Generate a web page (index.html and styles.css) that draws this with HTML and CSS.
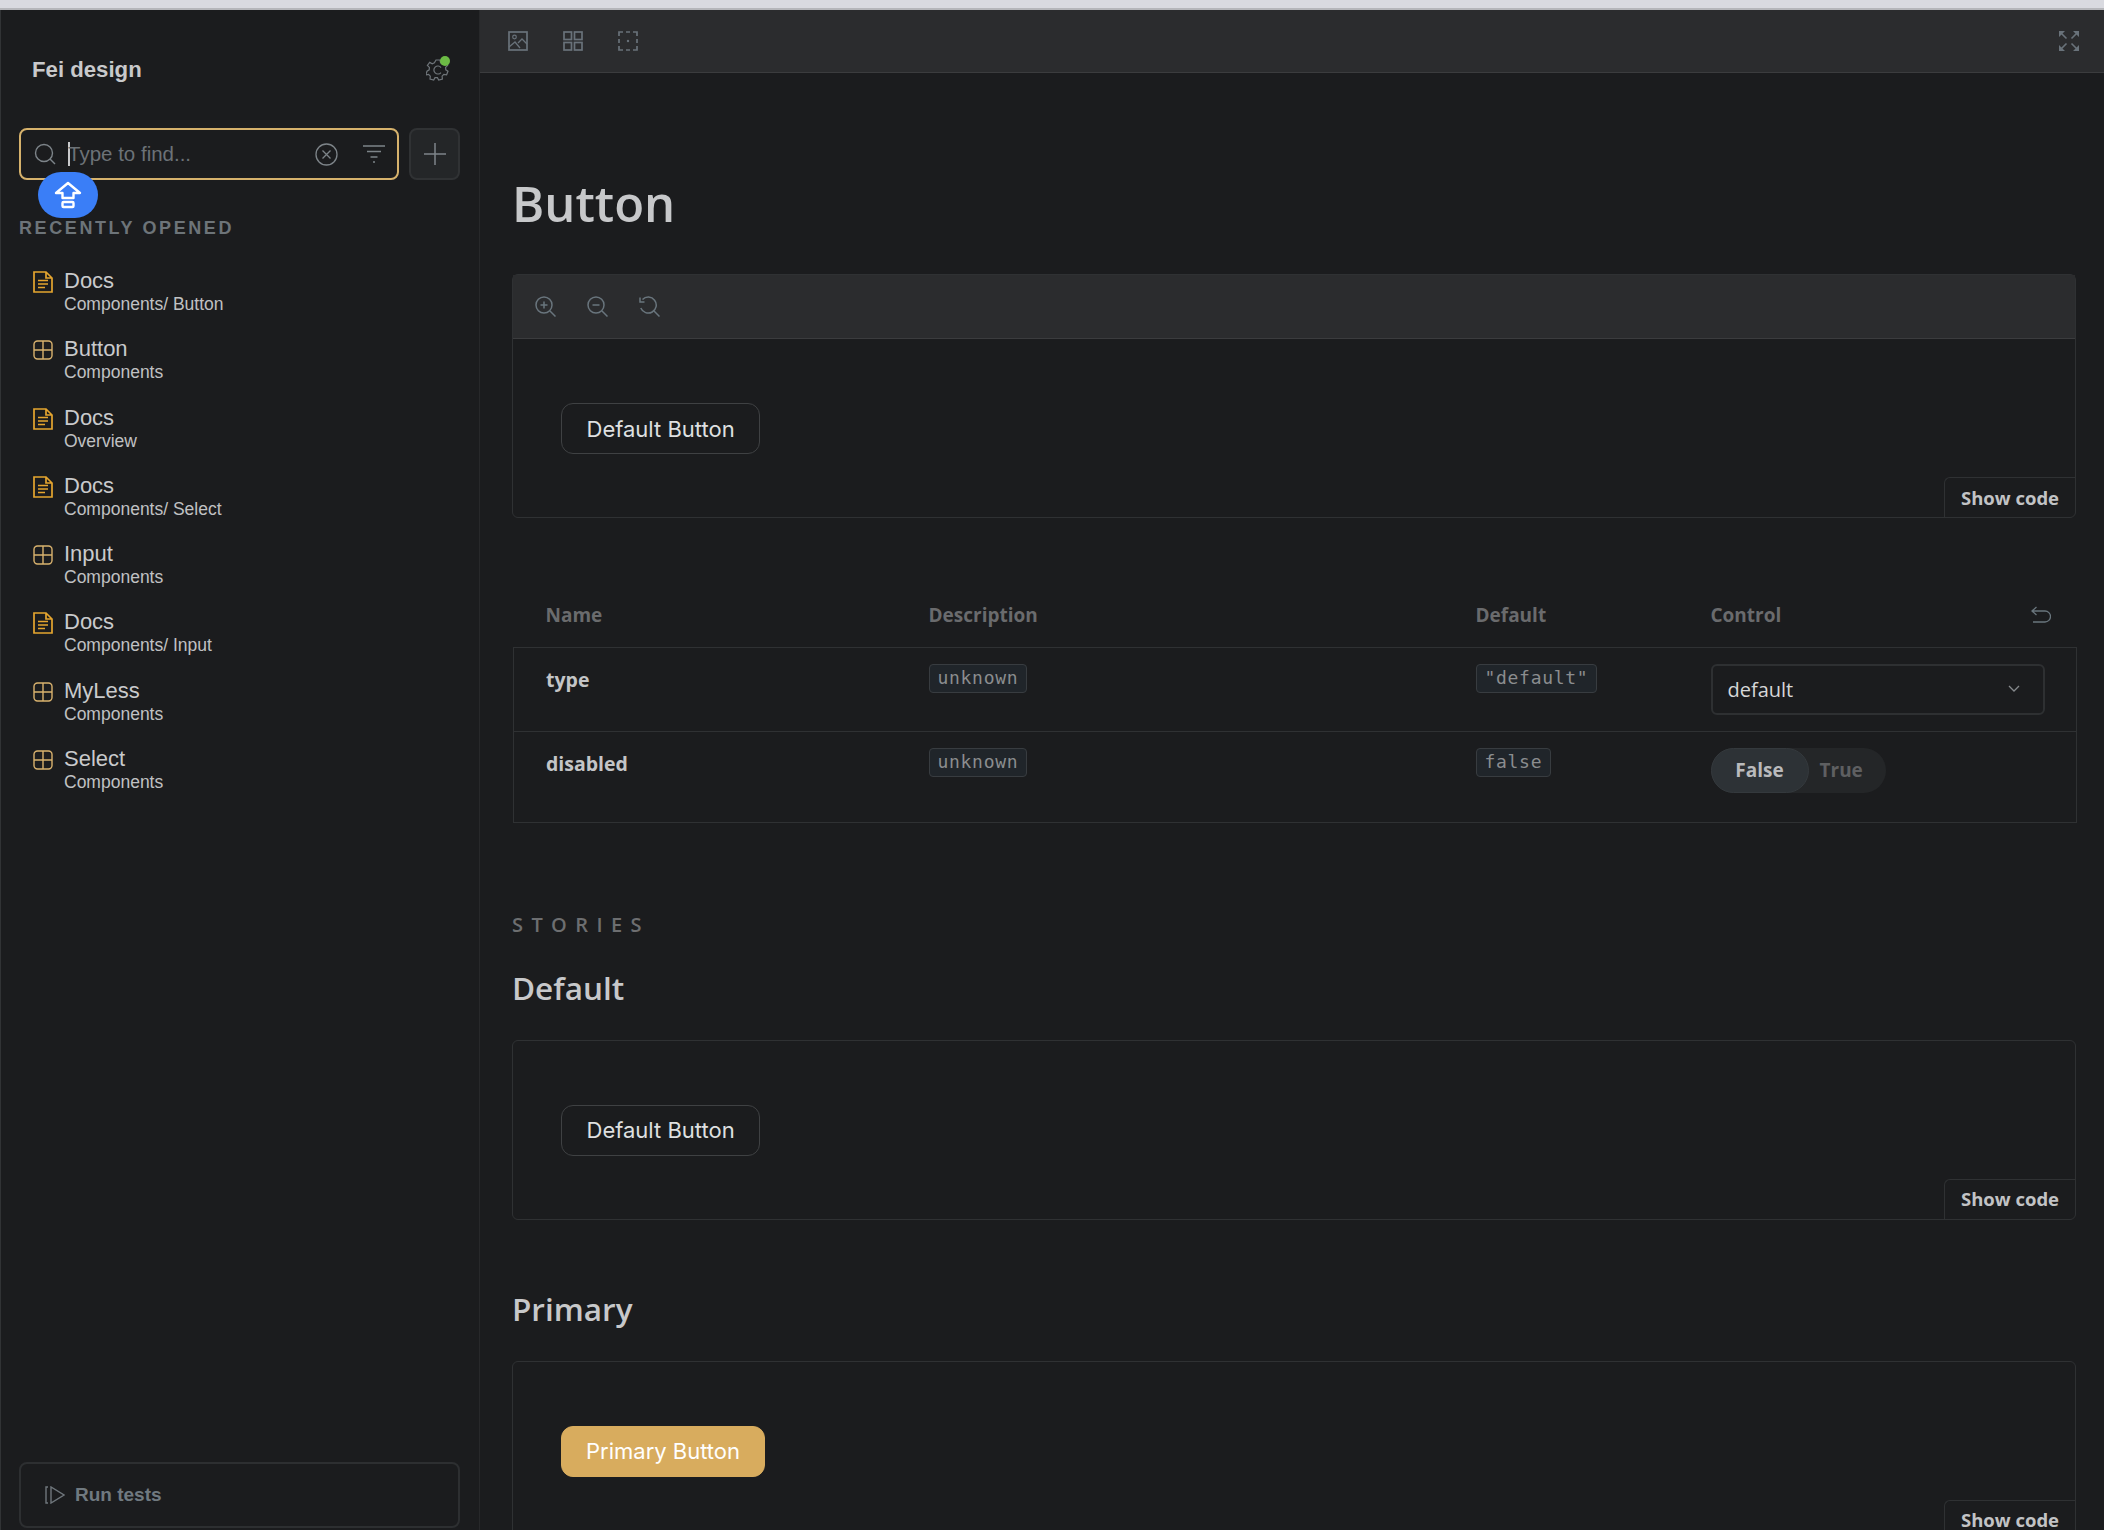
FILE: index.html
```html
<!DOCTYPE html>
<html lang="en">
<head>
  <meta charset="UTF-8">
  <title>Button</title>
  <link rel="stylesheet" href="styles.css">
</head>
<body>
  <svg class="defs" width="0" height="0">
    <symbol id="doc" viewBox="0 0 20 22">
      <path d="M1 1H13L19 7V21H1Z M13 1V7H19" fill="none" stroke="#e5a52f" stroke-width="1.7"/>
      <path d="M5 9.5H15M5 13H15M5 16.5H12" fill="none" stroke="#e5a52f" stroke-width="1.5"/>
    </symbol>
    <symbol id="comp" viewBox="0 0 20 20">
      <rect x="1" y="1" width="18" height="18" rx="3.5" fill="none" stroke="#d9b26e" stroke-width="1.4"/>
      <path d="M10 1V19M1 10H19" stroke="#d9b26e" stroke-width="1.4"/>
    </symbol>
  </svg>

  <div class="topline"></div>

  <div class="app">
    <aside class="sidebar">
      <div class="brand">
        <span class="brand-name">Fei design</span>
        <span class="settings">
          <svg width="24" height="24" viewBox="0 0 24 24" fill="none" stroke="#6f757a" stroke-width="1.2">
            <path d="M10 2h4l.6 2.8 2.2 1 2.5-1.4 2.3 3-2 2 .2 2.4 2.2 1.4-1.4 3.6-2.8-.4-1.7 1.8.3 2.9-3.7 1-1.3-2.4h-2.4l-1.3 2.4-3.7-1 .3-2.9-1.7-1.8-2.8.4L1 13.2l2.2-1.4.2-2.4-2-2 2.3-3 2.5 1.4 2.2-1z"/>
            <path d="M15 9.5a4 4 0 1 0 0 5"/>
          </svg>
          <i class="status-dot"></i>
        </span>
      </div>

      <div class="search-row">
        <div class="search">
          <svg width="22" height="22" viewBox="0 0 22 22" fill="none" stroke="#7d8489" stroke-width="1.4">
            <circle cx="10" cy="10" r="8.5"/><path d="M16 16l5 5"/>
          </svg>
          <span class="caret"></span>
          <span class="search-text">Type to find...</span>
          <svg class="clear" width="23" height="23" viewBox="0 0 23 23" fill="none" stroke="#7d8489" stroke-width="1.3">
            <circle cx="11.5" cy="11.5" r="10.5"/><path d="M7.5 7.5l8 8M15.5 7.5l-8 8"/>
          </svg>
          <svg class="filter" width="22" height="18" viewBox="0 0 22 18" fill="none" stroke="#7d8489" stroke-width="1.4">
            <path d="M0 1H22M4 6.500H18M7.500 12H14.500M10 17H12"/>
          </svg>
        </div>
        <div class="add">
          <svg width="24" height="24" viewBox="0 0 24 24" stroke="#7d8489" stroke-width="1.500"><path d="M12 1V23M1 12H23"/></svg>
        </div>
        <div class="shift-badge">
          <svg width="28" height="28" viewBox="0 0 28 28" fill="none" stroke="#fff" stroke-width="2.400" stroke-linejoin="round">
            <path d="M14 2L26 12H19.500V17H8.500V12H2Z"/><rect x="8.500" y="21" width="11" height="5" rx="1"/>
          </svg>
        </div>
      </div>

      <div class="section-label">RECENTLY OPENED</div>

      <ul class="recent">
        <li><svg class="ic"><use href="#doc"/></svg><div><b>Docs</b><small>Components/ Button</small></div></li>
        <li><svg class="ic"><use href="#comp"/></svg><div><b>Button</b><small>Components</small></div></li>
        <li><svg class="ic"><use href="#doc"/></svg><div><b>Docs</b><small>Overview</small></div></li>
        <li><svg class="ic"><use href="#doc"/></svg><div><b>Docs</b><small>Components/ Select</small></div></li>
        <li><svg class="ic"><use href="#comp"/></svg><div><b>Input</b><small>Components</small></div></li>
        <li><svg class="ic"><use href="#doc"/></svg><div><b>Docs</b><small>Components/ Input</small></div></li>
        <li><svg class="ic"><use href="#comp"/></svg><div><b>MyLess</b><small>Components</small></div></li>
        <li><svg class="ic"><use href="#comp"/></svg><div><b>Select</b><small>Components</small></div></li>
      </ul>

      <div class="run-tests">
        <svg width="20" height="18" viewBox="0 0 20 18" fill="none" stroke="#6f767c" stroke-width="1.400">
          <path d="M3 1H1V17H3M6 1V17L19 9Z"/>
        </svg>
        <span>Run tests</span>
      </div>
    </aside>

    <div class="content">
      <div class="toolbar">
        <div class="tool-group">
          <svg width="20" height="20" viewBox="0 0 20 20" fill="none" stroke="#69727a" stroke-width="1.700">
            <rect x="1" y="1" width="18" height="18"/><circle cx="6.500" cy="6" r="1.800" stroke-width="1.200"/><path d="M1 16l6-5 5 6M10 12l4-4 5 5" stroke-width="1.300"/>
          </svg>
          <svg width="20" height="20" viewBox="0 0 20 20" fill="none" stroke="#69727a" stroke-width="1.700">
            <rect x="1" y="1" width="7.500" height="7.500"/><rect x="11.500" y="1" width="7.500" height="7.500"/>
            <rect x="1" y="11.500" width="7.500" height="7.500"/><rect x="11.500" y="11.500" width="7.500" height="7.500"/>
          </svg>
          <svg width="20" height="20" viewBox="0 0 20 20" fill="none" stroke="#69727a" stroke-width="1.700">
            <path d="M1 5V1H5M8 1H12M15 1H19V5M19 8V12M19 15V19H15M12 19H8M5 19H1V15M1 12V8"/>
            <circle cx="10" cy="10" r="1.200" fill="#69727a" stroke="none"/>
          </svg>
        </div>
        <svg width="20" height="20" viewBox="0 0 20 20" fill="none" stroke="#69727a" stroke-width="1.600">
          <path d="M2 2l5.500 5.500M18 2l-5.500 5.500M2 18l5.500-5.500M18 18l-5.500-5.500"/>
          <path d="M0 6V0H6ZM14 0H20V6ZM0 14V20H6ZM20 14V20H14Z" fill="#69727a" stroke="none"/>
        </svg>
      </div>

      <main class="docs">
        <h1>Button</h1>

        <section class="canvas canvas-first">
          <div class="canvas-tools">
            <svg width="21" height="21" viewBox="0 0 21 21" fill="none" stroke="#69757d" stroke-width="1.500">
              <circle cx="9" cy="9" r="8"/><path d="M15 15l5.500 5.500M9 5.500v7M5.500 9h7"/>
            </svg>
            <svg width="21" height="21" viewBox="0 0 21 21" fill="none" stroke="#69757d" stroke-width="1.500">
              <circle cx="9" cy="9" r="8"/><path d="M15 15l5.500 5.500M5.500 9h7"/>
            </svg>
            <svg width="21" height="21" viewBox="0 0 21 21" fill="none" stroke="#69757d" stroke-width="1.500">
              <path d="M3.500 3.500A8 8 0 1 1 1.800 12M15 15l5.500 5.500M1 1.500V6H5.500"/>
            </svg>
          </div>
          <div class="canvas-body">
            <button class="btn">Default Button</button>
            <span class="show-code">Show code</span>
          </div>
        </section>

        <table class="args">
          <thead>
            <tr>
              <th class="col-name">Name</th>
              <th class="col-desc">Description</th>
              <th class="col-def">Default</th>
              <th class="col-ctl">
                <div class="ctl-head">
                  <span>Control</span>
                  <svg width="20" height="17" viewBox="0 0 20 17" fill="none" stroke="#69757d" stroke-width="1.300">
                    <path d="M5.500 1L1 5L5.500 9M1 5H14a5 5 0 0 1 0 11H2"/>
                  </svg>
                </div>
              </th>
            </tr>
          </thead>
          <tbody>
            <tr class="row-type">
              <td class="arg-name">type</td>
              <td><code>unknown</code></td>
              <td><code>"default"</code></td>
              <td>
                <div class="select">
                  <span>default</span>
                  <svg width="12" height="8" viewBox="0 0 12 8" fill="none" stroke="#85898c" stroke-width="1.300"><path d="M1 1l5 5 5-5"/></svg>
                </div>
              </td>
            </tr>
            <tr class="row-disabled">
              <td class="arg-name">disabled</td>
              <td><code>unknown</code></td>
              <td><code>false</code></td>
              <td>
                <div class="toggle">
                  <span class="on">False</span>
                  <span class="off">True</span>
                </div>
              </td>
            </tr>
          </tbody>
        </table>

        <div class="stories-label">STORIES</div>

        <h2 class="first-story">Default</h2>
        <section class="canvas">
          <div class="canvas-body">
            <button class="btn">Default Button</button>
            <span class="show-code">Show code</span>
          </div>
        </section>

        <h2 class="next-story">Primary</h2>
        <section class="canvas">
          <div class="canvas-body">
            <button class="btn btn-primary">Primary Button</button>
            <span class="show-code">Show code</span>
          </div>
        </section>
      </main>
    </div>
  </div>
</body>
</html>
```

FILE: styles.css
```css
* {
  box-sizing: border-box;
}

html, body {
  margin: 0;
  height: 100%;
  overflow: hidden;
}

body {
  background: #1b1c1e;
  font-family: "Open Sans", "Noto Sans", sans-serif;
  color: #c9cacc;
}

.defs {
  position: absolute;
}

.topline {
  height: 10px;
  background: #d9dae0;
  border-bottom: 2px solid #b5b6ba;
}

.app {
  display: flex;
  height: 1520px;
}

/* Sidebar */
.sidebar {
  width: 480px;
  flex: none;
  display: flex;
  flex-direction: column;
  padding: 0 19px 2px 18px;
  border-left: 1px solid #313335;
  border-right: 1px solid #27282a;
  font-family: "Liberation Sans", Arial, sans-serif;
}

.brand {
  display: flex;
  justify-content: space-between;
  align-items: center;
  height: 118px;
  padding: 2px 10px 0 13px;
}

.brand-name {
  font-size: 22.200px;
  font-weight: bold;
  color: #c8c9cb;
}

.settings {
  position: relative;
  display: block;
  width: 24px;
  height: 24px;
}

.status-dot {
  position: absolute;
  top: -2px;
  right: 0;
  width: 10px;
  height: 10px;
  border-radius: 50%;
  background: #6cbb45;
}

.search-row {
  position: relative;
  display: flex;
  gap: 10px;
}

.search {
  width: 380px;
  height: 52px;
  display: flex;
  align-items: center;
  padding: 0 12px 0 13px;
  border: 2px solid #d6b26c;
  border-radius: 8px;
}

.caret {
  width: 2px;
  height: 24px;
  margin-left: 12px;
  background: #c9cacc;
}

.search-text {
  flex: 1;
  margin-left: -2px;
  font-size: 20.500px;
  color: #6c7277;
}

.clear {
  margin-right: 25px;
}

.add {
  width: 51px;
  height: 52px;
  display: flex;
  align-items: center;
  justify-content: center;
  background: #242628;
  border: 2px solid #303234;
  border-radius: 8px;
}

.shift-badge {
  position: absolute;
  left: 19px;
  top: 44px;
  width: 60px;
  height: 46px;
  display: flex;
  align-items: center;
  justify-content: center;
  background: #3a7ef7;
  border-radius: 23px;
}

.section-label {
  margin-top: 37px;
  font-size: 18px;
  line-height: 22px;
  font-weight: bold;
  letter-spacing: 2.600px;
  color: #6d7479;
}

.recent {
  list-style: none;
  margin: 26px 0 0;
  padding: 0;
  flex: 1;
}

.recent li {
  display: flex;
  height: 68.300px;
  padding-left: 14px;
  gap: 11px;
}

.ic {
  width: 20px;
  height: 22px;
  margin-top: 6px;
  flex: none;
}

.recent li div {
  padding-top: 3px;
}

.recent b {
  display: block;
  font-weight: normal;
  font-size: 22px;
  line-height: 25px;
  color: #c9cacc;
}

.recent small {
  display: block;
  font-size: 17.500px;
  line-height: 22px;
  color: #c0c1c3;
}

.run-tests {
  height: 66px;
  display: flex;
  align-items: center;
  gap: 10px;
  padding-left: 24px;
  border: 2px solid #2d2f31;
  border-radius: 8px;
  font-size: 19px;
  font-weight: bold;
  color: #707980;
}

/* Main area */
.content {
  flex: 1;
  min-width: 0;
}

.toolbar {
  height: 63px;
  display: flex;
  align-items: center;
  justify-content: space-between;
  padding: 0 25px 0 28px;
  background: #2b2c2e;
  border-bottom: 1px solid #3b3c3e;
}

.tool-group {
  display: flex;
  gap: 35px;
}

.docs {
  padding: 0 28px 0 32px;
}

h1 {
  margin: 0;
  padding-top: 96px;
  font-size: 49px;
  line-height: 68px;
  font-weight: 600;
  color: #c7c8ca;
}

h2 {
  margin: 0;
  font-size: 31.500px;
  line-height: 44px;
  font-weight: 600;
  color: #c7c8ca;
}

.canvas {
  border: 1px solid #2f3133;
  border-radius: 6px;
}

.canvas-first {
  margin-top: 37px;
}

.canvas-tools {
  height: 64px;
  display: flex;
  align-items: center;
  gap: 31px;
  padding-left: 22px;
  background: #2b2c2e;
  border-bottom: 1px solid #3b3c3e;
}

.canvas-body {
  position: relative;
  height: 178px;
  padding: 64px 0 0 48px;
}

.btn {
  display: block;
  height: 51px;
  padding: 0 24.500px;
  font-family: Inter, "Liberation Sans", sans-serif;
  font-size: 22px;
  color: #dfe0e1;
  background: transparent;
  border: 1px solid #3f4143;
  border-radius: 12px;
}

.btn-primary {
  padding: 0 24px;
  color: #fff;
  background: #d8ac5e;
  border-color: #d8ac5e;
}

.show-code {
  position: absolute;
  right: 0;
  bottom: 0;
  width: 131px;
  height: 40px;
  display: flex;
  align-items: center;
  justify-content: center;
  padding-bottom: 1px;
  font-size: 18.500px;
  font-weight: 700;
  color: #c2c3c5;
  border-left: 1px solid #2f3133;
  border-top: 1px solid #2f3133;
  border-top-left-radius: 6px;
}

/* Args table */
.args {
  width: 1564px;
  margin: 48px 0 0 1px;
  border-collapse: collapse;
  table-layout: fixed;
}

.args th {
  height: 81px;
  padding: 17px 0 0;
  text-align: left;
  vertical-align: middle;
  font-size: 19px;
  font-weight: 700;
  color: #6a6b6d;
}

.col-name { width: 415px; padding-left: 32px !important; }
.col-desc { width: 547px; }
.col-def { width: 235px; }

.ctl-head {
  display: flex;
  align-items: center;
  justify-content: space-between;
  padding-right: 26px;
}

.args td {
  padding: 16px 0 0;
  vertical-align: top;
  border: 1px solid #2f3133;
  border-left: none;
  border-right: none;
}

.args tbody tr td:first-child {
  border-left: 1px solid #2f3133;
  padding-left: 32px;
}

.args tbody tr td:last-child {
  border-right: 1px solid #2f3133;
}

.row-type td { height: 84px; }
.row-disabled td { height: 91px; }

.args td.arg-name {
  padding-top: 17px;
  font-size: 19.500px;
  font-weight: 700;
  line-height: 30px;
  color: #c4c5c7;
}

code {
  display: inline-block;
  height: 29px;
  padding: 0 8px;
  font-family: "DejaVu Sans Mono", "Liberation Mono", monospace;
  font-size: 18px;
  line-height: 26px;
  letter-spacing: .7px;
  color: #8b8d8f;
  background: #20252a;
  border: 1px solid #383c40;
  border-radius: 4px;
}

.select {
  width: 334px;
  height: 51px;
  display: flex;
  align-items: center;
  justify-content: space-between;
  padding: 0 23px 0 15px;
  font-size: 20px;
  color: #d6d7d8;
  border: 2px solid #2e3032;
  border-radius: 6px;
}

.toggle {
  width: 175px;
  height: 45px;
  display: flex;
  align-items: center;
  background: #242628;
  border-radius: 23px;
  font-size: 19px;
  font-weight: 700;
}

.toggle .on {
  width: 98px;
  height: 45px;
  display: flex;
  align-items: center;
  justify-content: center;
  color: #b9babc;
  background: #2d3236;
  border: 1px solid #34393d;
  border-radius: 23px;
}

.toggle .off {
  margin-left: 11px;
  color: #5e5f61;
}

/* Stories */
.stories-label {
  margin-top: 89px;
  font-size: 20px;
  line-height: 26px;
  font-weight: 600;
  letter-spacing: 8.400px;
  color: #6d6e70;
}

.first-story {
  margin-top: 28px;
  margin-bottom: 30px;
}

.next-story {
  margin-top: 67px;
  margin-bottom: 30px;
}
```
